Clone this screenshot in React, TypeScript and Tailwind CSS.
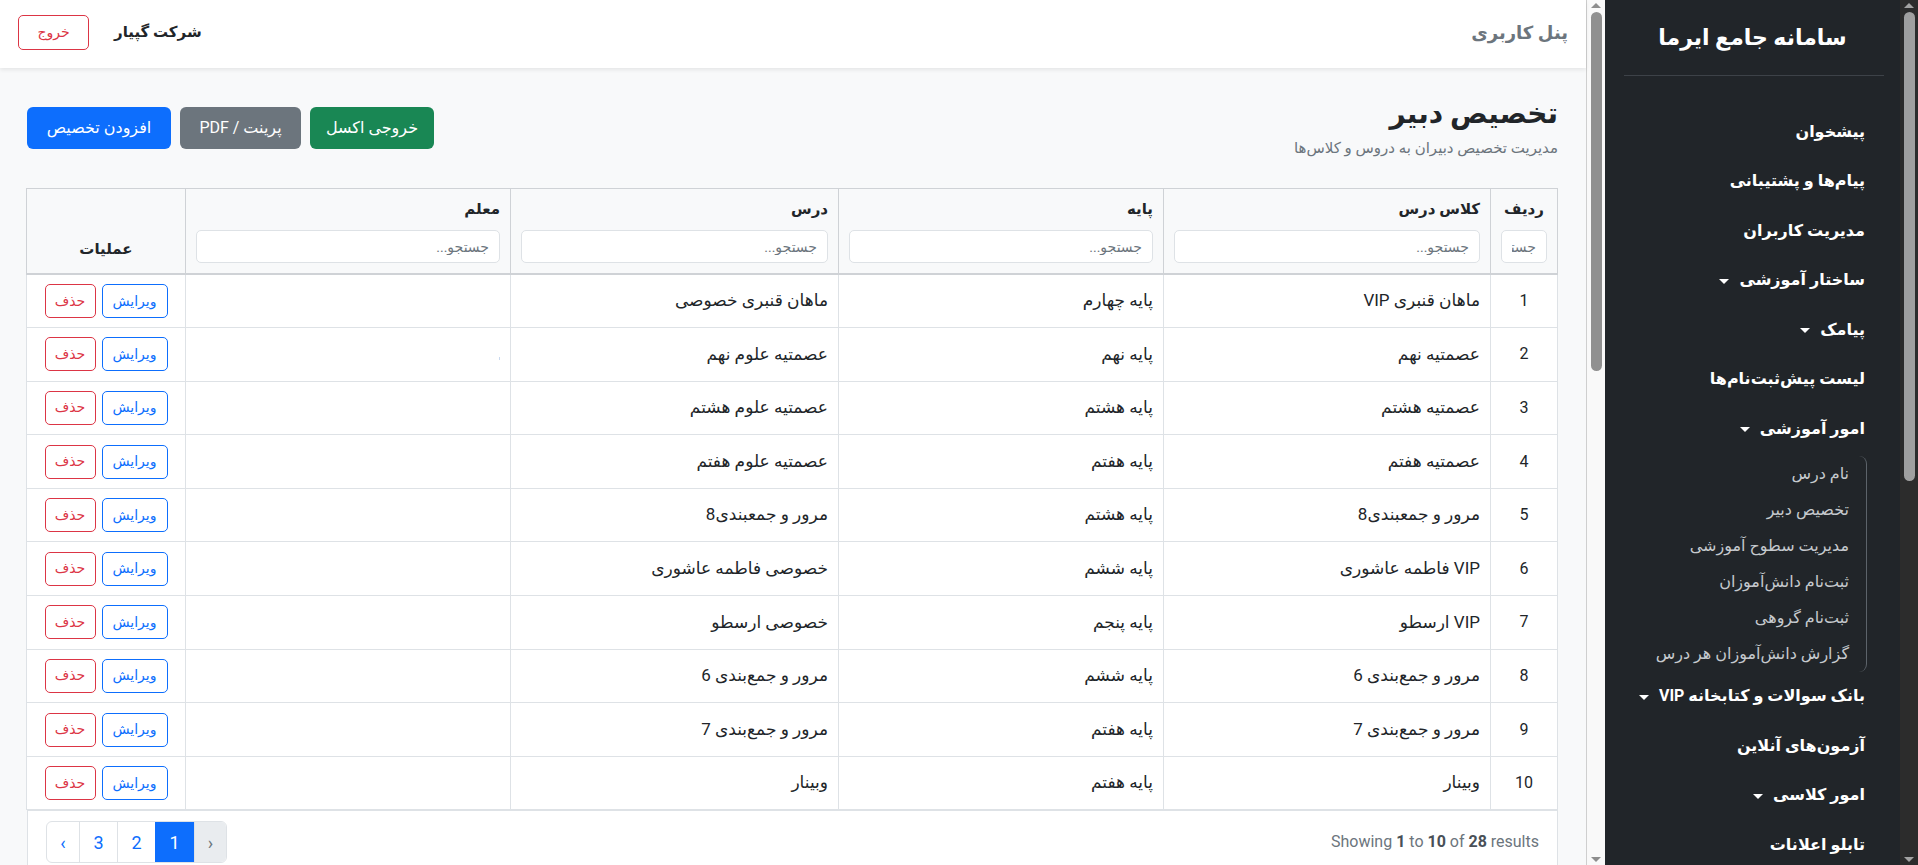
import React from "react";

const rows: [string, string, string, boolean?][] = [
  ["ماهان قنبری VIP", "پایه چهارم", "ماهان قنبری خصوصی"],
  ["عصمتیه نهم", "پایه نهم", "عصمتیه علوم نهم", true],
  ["عصمتیه هشتم", "پایه هشتم", "عصمتیه علوم هشتم"],
  ["عصمتیه هفتم", "پایه هفتم", "عصمتیه علوم هفتم"],
  ["مرور و جمعبندی8", "پایه هشتم", "مرور و جمعبندی8"],
  ["VIP فاطمه عاشوری", "پایه ششم", "خصوصی فاطمه عاشوری"],
  ["VIP ارسطو", "پایه پنجم", "خصوصی ارسطو"],
  ["مرور و جمع‌بندی 6", "پایه ششم", "مرور و جمع‌بندی 6"],
  ["مرور و جمع‌بندی 7", "پایه هفتم", "مرور و جمع‌بندی 7"],
  ["وبینار", "پایه هفتم", "وبینار"],
];

const menu1: { t: string; c?: boolean }[] = [
  { t: "پیشخوان" },
  { t: "پیام‌ها و پشتیبانی" },
  { t: "مدیریت کاربران" },
  { t: "ساختار آموزشی", c: true },
  { t: "پیامک", c: true },
  { t: "لیست پیش‌ثبت‌نام‌ها" },
  { t: "امور آموزشی", c: true },
];
const sub = [
  "نام درس",
  "تخصیص دبیر",
  "مدیریت سطوح آموزشی",
  "ثبت‌نام دانش‌آموزان",
  "ثبت‌نام گروهی",
  "گزارش دانش‌آموزان هر درس",
];
const menu2: { t: string; c?: boolean }[] = [
  { t: "بانک سوالات و کتابخانه VIP", c: true },
  { t: "آزمون‌های آنلاین" },
  { t: "امور کلاسی", c: true },
  { t: "تابلو اعلانات" },
];

function Caret() {
  return (
    <span className="mt-[2px] inline-block h-0 w-0 border-x-[5px] border-t-[5px] border-x-transparent border-t-white" />
  );
}

function MenuItem({ t, c }: { t: string; c?: boolean }) {
  return (
    <div className="flex h-[49.5px] items-center gap-[10px] text-[16px] font-bold text-white">
      <span>{t}</span>
      {c && <Caret />}
    </div>
  );
}

function HeadCell({ label, center }: { label: string; center?: boolean }) {
  return (
    <th
      className={`border border-b-2 border-[#cfd2d6] px-[10px] pb-[10px] pt-[8px] align-top text-[15px] font-bold ${
        center ? "text-center" : "text-right"
      }`}
    >
      <div className="leading-[24px]">{label}</div>
      <input
        placeholder="جستجو..."
        className="mt-[9px] block h-[33px] w-full rounded-[5px] border border-[#dee2e6] bg-white px-[10px] text-[14px] font-normal outline-none placeholder:text-[#6c757d]"
      />
    </th>
  );
}

export default function App() {
  return (
    <div
      dir="rtl"
      className="flex h-[865px] w-[1918px] overflow-hidden font-[family-name:Roboto,'DejaVu_Sans',sans-serif] text-[#212529]"
    >
      {/* Sidebar */}
      <aside className="flex h-full w-[313px] shrink-0 bg-[#212529]">
        <div className="flex h-full w-[18px] shrink-0 flex-col items-center bg-[#2c2c2c] py-[3px]">
          <span className="h-0 w-0 border-x-[5px] border-b-[5px] border-x-transparent border-b-[#a3a3a3]" />
          <div className="mt-[4px] h-[469px] w-[11px] rounded-full bg-[#a0a0a0]" />
          <div className="flex-1" />
          <span className="h-0 w-0 border-x-[5px] border-t-[5px] border-x-transparent border-t-[#a3a3a3]" />
        </div>
        <div className="flex-1">
          <div className="flex h-[75px] items-center justify-center text-[22px] font-bold text-white">
            سامانه جامع ایرما
          </div>
          <div className="ml-[19px] mr-[16px] h-px bg-[#3d4248]" />
          <nav className="pr-[35px] pt-[31px]">
            {menu1.map((m) => (
              <MenuItem key={m.t} {...m} />
            ))}
            <div className="mr-[-2px] mt-[2px] rounded-r-[8px] border-r border-[#5c636a] pr-[17px]">
              {sub.map((s) => (
                <div key={s} className="flex h-[36px] items-center text-[16px] text-[#c6cace]">
                  {s}
                </div>
              ))}
            </div>
            {menu2.map((m) => (
              <MenuItem key={m.t} {...m} />
            ))}
          </nav>
        </div>
      </aside>

      {/* main scrollbar */}
      <div className="flex h-full w-[19px] shrink-0 flex-col items-center border-l border-[#cfcfcf] bg-[#f9f9f9] py-[3px]">
        <span className="h-0 w-0 border-x-[5px] border-b-[5px] border-x-transparent border-b-[#8d8d8d]" />
        <div className="mt-[4px] h-[359px] w-[11px] rounded-full bg-[#909090]" />
        <div className="flex-1" />
        <span className="h-0 w-0 border-x-[5px] border-t-[5px] border-x-transparent border-t-[#8d8d8d]" />
      </div>

      {/* Main */}
      <main className="flex h-full min-w-0 flex-1 flex-col bg-[#f8f9fa]">
        <header className="relative z-10 flex h-[68px] shrink-0 items-center justify-between bg-white pb-[4px] pl-[18px] pr-[18px] shadow-[0_2px_4px_rgba(0,0,0,0.08)]">
          <span className="text-[18px] font-bold text-[#6c757d]">پنل کاربری</span>
          <div className="flex items-center gap-[25px]">
            <span className="text-[15px] font-bold text-[#212529]">شرکت گپیار</span>
            <button className="h-[35px] w-[71px] rounded-[5px] border border-[#dc3545] text-[14px] text-[#dc3545]">
              خروج
            </button>
          </div>
        </header>

        <div className="min-h-0 flex-1 overflow-hidden pl-[27px] pr-[28px]">
          <div className="flex items-start justify-between pt-[28px]">
            <div>
              <h1 className="text-[28px] font-bold leading-[36px] text-[#212529]">تخصیص دبیر</h1>
              <p className="mt-[6px] text-[15px] leading-[20px] text-[#6c757d]">
                مدیریت تخصیص دبیران به دروس و کلاس‌ها
              </p>
            </div>
            <div className="mt-[11px] flex gap-[9px]">
              <button className="h-[42px] w-[124px] rounded-[6px] bg-[#198754] text-[16px] text-white">
                خروجی اکسل
              </button>
              <button className="h-[42px] w-[121px] rounded-[6px] bg-[#6c757d] text-[16px] text-white">
                پرینت / PDF
              </button>
              <button className="h-[42px] w-[144px] rounded-[6px] bg-[#0d6efd] text-[16px] text-white">
                افزودن تخصیص
              </button>
            </div>
          </div>

          <div className="mt-[30px] bg-white">
            <table className="w-full table-fixed border-collapse text-[17px] text-[#212529]">
              <colgroup>
                <col className="w-[67px]" />
                <col className="w-[327px]" />
                <col className="w-[325px]" />
                <col className="w-[328px]" />
                <col className="w-[325px]" />
                <col className="w-[159px]" />
              </colgroup>
              <thead className="bg-[#f8f9fa]">
                <tr>
                  <HeadCell label="ردیف" center />
                  <HeadCell label="کلاس درس" />
                  <HeadCell label="پایه" />
                  <HeadCell label="درس" />
                  <HeadCell label="معلم" />
                  <th className="border border-b-2 border-[#cfd2d6] px-[10px] pb-[12px] align-bottom text-center text-[15px] font-bold leading-[24px]">
                    عملیات
                  </th>
                </tr>
              </thead>
              <tbody>
                {rows.map((r, i) => (
                  <tr key={i} className="h-[53.6px]">
                    <td className="border border-[#dee2e6] text-center text-[16px]">{i + 1}</td>
                    <td className="border border-[#dee2e6] px-[10px]">{r[0]}</td>
                    <td className="border border-[#dee2e6] px-[10px]">{r[1]}</td>
                    <td className="border border-[#dee2e6] px-[10px]">{r[2]}</td>
                    <td className="border border-[#dee2e6] px-[10px]">
                      {r[3] && <span className="inline-block h-[3px] w-px bg-[#c9d9ef]" />}
                    </td>
                    <td className="border border-[#dee2e6]">
                      <div className="flex justify-center gap-[6px]">
                        <button className="h-[34px] w-[66px] rounded-[5px] border border-[#0d6efd] text-[14px] text-[#0d6efd]">
                          ویرایش
                        </button>
                        <button className="h-[34px] w-[51px] rounded-[5px] border border-[#dc3545] text-[14px] text-[#dc3545]">
                          حذف
                        </button>
                      </div>
                    </td>
                  </tr>
                ))}
              </tbody>
            </table>
            <div className="flex h-[80px] items-start justify-between border-x border-t border-[#dee2e6] px-[18px] pt-[10px]">
              <div className="flex h-[42px] items-center text-[16px] text-[#6c757d]" dir="ltr">
                <span>
                  Showing <b className="text-[#495057]">1</b> to <b className="text-[#495057]">10</b> of{" "}
                  <b className="text-[#495057]">28</b> results
                </span>
              </div>
              <div className="flex h-[42px] overflow-hidden rounded-[6px] border border-[#dee2e6] text-[18px]">
                <div className="flex w-[32px] items-center justify-center border-l border-[#dee2e6] bg-[#e9ecef] text-[#6c757d]">
                  <span dir="ltr">›</span>
                </div>
                <div className="flex w-[39px] items-center justify-center bg-[#0d6efd] text-white">1</div>
                <div className="flex w-[38px] items-center justify-center border-l border-[#dee2e6] text-[#0d6efd]">
                  2
                </div>
                <div className="flex w-[38px] items-center justify-center border-l border-[#dee2e6] text-[#0d6efd]">
                  3
                </div>
                <div className="flex w-[32px] items-center justify-center text-[#0d6efd]">
                  <span dir="ltr">‹</span>
                </div>
              </div>
            </div>
          </div>
        </div>
      </main>
    </div>
  );
}
